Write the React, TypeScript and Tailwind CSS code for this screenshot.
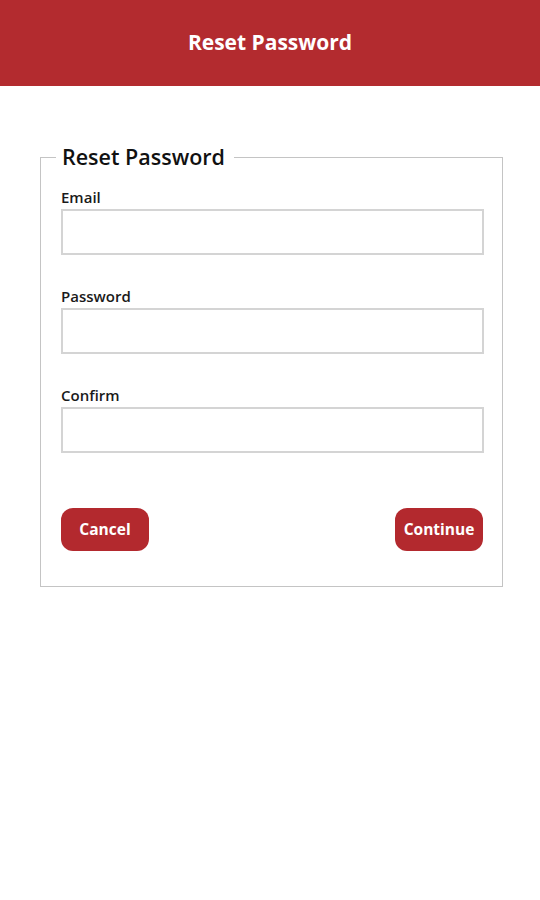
const Field = ({ label, type = "text" }: { label: string; type?: string }) => (
  <div className="flex flex-col">
    <label className="text-[15px] leading-[20px] font-semibold text-[#1a1a1a]">{label}</label>
    <input
      type={type}
      className="mt-[2px] h-[46px] w-[423px] border-2 border-[#d4d4d4] bg-white outline-none"
    />
  </div>
);

export default function App() {
  return (
    <div className="min-h-[900px] w-[540px] bg-white font-['Open_Sans',sans-serif]">
      {/* HEADER */}
      <header className="flex h-[86px] items-center justify-center bg-[#b32b2f]">
        <h1 className="text-[21px] font-bold text-white">Reset Password</h1>
      </header>

      {/* FORM */}
      <fieldset className="ml-[40px] mt-[59px] h-[442px] w-[463px] border border-[#c4c4c4] pl-[20px] pr-[18px]">
        <legend className="ml-[-5px] px-[6px] pr-[9px] text-[21.5px] leading-[24px] font-semibold text-[#111]">
          Reset Password
        </legend>

        <div className="mt-[18px] flex flex-col gap-[31px]">
          <Field label="Email" type="email" />
          <Field label="Password" type="password" />
          <Field label="Confirm" type="password" />
        </div>

        <div className="mt-[55px] flex items-center justify-between pr-[1px]">
          <button className="h-[43px] w-[88px] rounded-[12px] bg-[#b3292e] text-[15.5px] font-bold text-white">
            Cancel
          </button>
          <button className="h-[43px] w-[88px] rounded-[12px] bg-[#b3292e] text-[15.5px] font-bold text-white">
            Continue
          </button>
        </div>
      </fieldset>
    </div>
  );
}
